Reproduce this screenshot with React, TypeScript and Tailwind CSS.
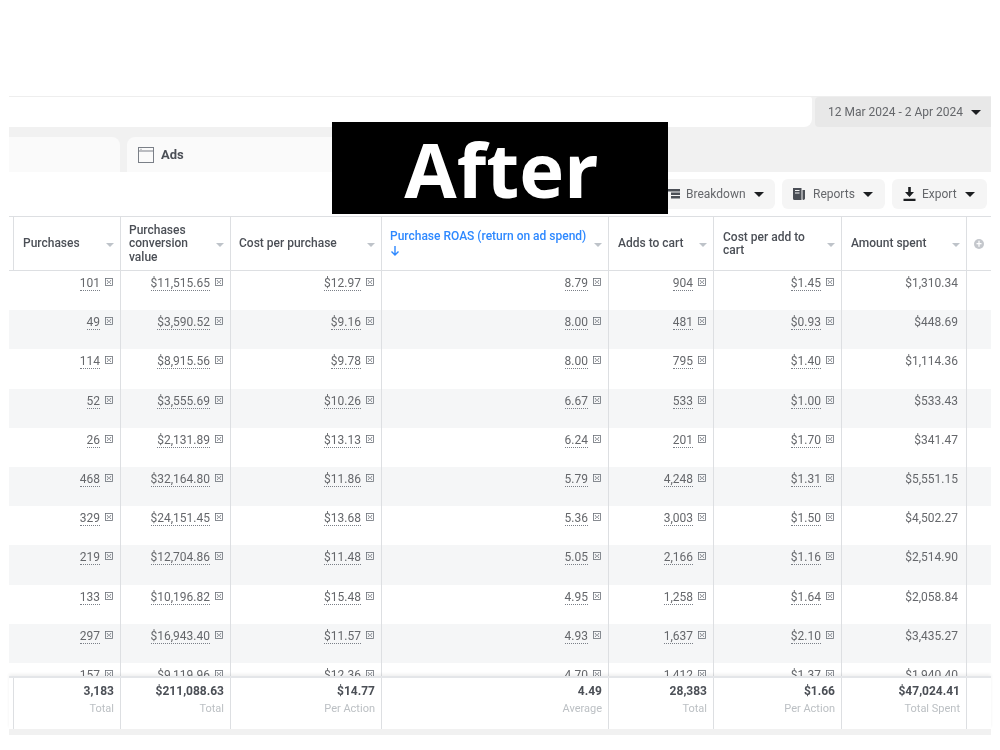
import React from 'react';

const rows = [
  ['101', '$11,515.65', '$12.97', '8.79', '904', '$1.45', '$1,310.34'],
  ['49', '$3,590.52', '$9.16', '8.00', '481', '$0.93', '$448.69'],
  ['114', '$8,915.56', '$9.78', '8.00', '795', '$1.40', '$1,114.36'],
  ['52', '$3,555.69', '$10.26', '6.67', '533', '$1.00', '$533.43'],
  ['26', '$2,131.89', '$13.13', '6.24', '201', '$1.70', '$341.47'],
  ['468', '$32,164.80', '$11.86', '5.79', '4,248', '$1.31', '$5,551.15'],
  ['329', '$24,151.45', '$13.68', '5.36', '3,003', '$1.50', '$4,502.27'],
  ['219', '$12,704.86', '$11.48', '5.05', '2,166', '$1.16', '$2,514.90'],
  ['133', '$10,196.82', '$15.48', '4.95', '1,258', '$1.64', '$2,058.84'],
  ['297', '$16,943.40', '$11.57', '4.93', '1,637', '$2.10', '$3,435.27'],
  ['157', '$9,119.96', '$12.36', '4.70', '1,412', '$1.37', '$1,940.40'],
];

const headers = [
  'Purchases',
  'Purchases conversion value',
  'Cost per purchase',
  'Purchase ROAS (return on ad spend)',
  'Adds to cart',
  'Cost per add to cart',
  'Amount spent',
];

const totals = [
  ['3,183', 'Total'],
  ['$211,088.63', 'Total'],
  ['$14.77', 'Per Action'],
  ['4.49', 'Average'],
  ['28,383', 'Total'],
  ['$1.66', 'Per Action'],
  ['$47,024.41', 'Total Spent'],
];

const gridCols = 'grid grid-cols-[4px_107px_110px_151px_227px_105px_128px_125px_25px]';

function Caret() {
  return <span className="ml-2 inline-block h-0 w-0 border-x-[5px] border-t-[5px] border-x-transparent border-t-[#1c1e21]" />;
}

function SortCaret() {
  return <span className="block h-0 w-0 border-x-[4px] border-t-[4px] border-x-transparent border-t-[#bec3c9]" />;
}

function FlagIcon() {
  return (
    <svg width="8" height="8" viewBox="0 0 8 8" className="ml-[5px] shrink-0" fill="none" stroke="#6b7078" strokeWidth="0.8">
      <rect x="0.5" y="0.5" width="7" height="7" />
      <path d="M2 2l1.6 2.2L2 6M6 2L4.4 4.2 6 6" />
    </svg>
  );
}

function HeaderCell({ label, index }: { label: string; index: number }) {
  const narrow = index === 1 || index === 5;
  const tight = index >= 1 && index <= 3;
  return (
    <div className={`flex h-full items-center justify-between border-l border-[#dddfe2] pr-[6px] ${tight ? 'pl-[8px]' : 'pl-[9px]'}`}>
      {index === 3 ? (
        <div className="text-[#2d88ff]">
          <div>{label}</div>
          <svg width="10" height="12" viewBox="0 0 10 12" fill="none" stroke="#2d88ff" strokeWidth="1.4" className="mt-[1px]">
            <path d="M5 1v9M1.5 6.5L5 10l3.5-3.5" />
          </svg>
        </div>
      ) : (
        <div className={narrow ? 'max-w-[88px] pt-[1px]' : 'pt-[1px]'}>{label}</div>
      )}
      <div className="ml-1 shrink-0 pt-[3px]">
        <SortCaret />
      </div>
    </div>
  );
}

export default function App() {
  return (
    <div className="relative h-[750px] w-[1000px] overflow-hidden bg-white font-['Roboto',sans-serif] text-[12px] text-[#606770]">
      <div className="h-[96px]" />
      <div className="mx-[9px] blur-[0.35px]">
        <div className="flex h-[31px] border-t border-[#eeeeee] bg-[#f1f1f1]">
          <div className="flex-1 rounded-br-[8px] rounded-tr-[2px] bg-white" />
          <div className="ml-[3px] flex w-[176px] items-center rounded-l-[4px] bg-[#e8e8e8] pl-[13px] text-[#65676b]">
            12 Mar 2024 - 2 Apr 2024
            <Caret />
          </div>
        </div>

        <div className="flex h-[45px] items-end gap-[7px] bg-[#f1f1f1]">
          <div className="h-[35px] w-[111px] rounded-tr-[8px] bg-[#fafafa]" />
          <div className="flex h-[35px] w-[240px] items-center rounded-t-[8px] bg-[#fafafa] pl-[11px]">
            <svg width="16" height="16" viewBox="0 0 16 16" fill="none" stroke="#7a7f87" strokeWidth="1">
              <rect x="0.5" y="0.5" width="15" height="15" />
              <path d="M0.5 4h15M2.5 2.3h1" />
            </svg>
            <span className="ml-[7px] text-[13px] font-bold text-[#4b4f56]">Ads</span>
          </div>
        </div>

        <div className="flex h-[44px] items-start justify-end gap-[7px] rounded-tr-[8px] bg-white pr-[4px] pt-[7px]">
          <div className="flex h-[30px] w-[115px] items-center rounded-[6px] bg-[#f5f5f5] pl-[8px] text-[#65676b]">
            <svg width="12" height="12" viewBox="0 0 12 12" fill="#4b4f56" className="mr-[6px]">
              <path d="M0 1h12v2.4H0zM3 4.5h9v2.4H3zM3 8h9v2.4H3z" />
            </svg>
            Breakdown
            <Caret />
          </div>
          <div className="flex h-[30px] w-[103px] items-center rounded-[6px] bg-[#f5f5f5] pl-[10px] text-[#65676b]">
            <svg width="14" height="14" viewBox="0 0 14 14" fill="#4b4f56" className="mr-[7px]">
              <path d="M1 1h8.5v12H2.5A1.5 1.5 0 0 1 1 11.5zM10.5 3H13v8.5a1.5 1.5 0 0 1-2.5 1z" />
              <path d="M3 3.5h4.5M3 6h4.5" stroke="#f5f5f5" strokeWidth="1" />
            </svg>
            Reports
            <Caret />
          </div>
          <div className="flex h-[30px] w-[95px] items-center rounded-[6px] bg-[#f5f5f5] pl-[11px] text-[#65676b]">
            <svg width="13" height="14" viewBox="0 0 13 14" fill="#1c1e21" className="mr-[6px]">
              <path d="M5.2 0h2.6v5H11L6.5 10 2 5h3.2zM0.5 11.7h12V14H0.5z" />
            </svg>
            Export
            <Caret />
          </div>
        </div>

        <div className={`${gridCols} h-[55px] border-y border-[#dddfe2] font-medium leading-[13.5px] text-[#4b4f56]`}>
          <div />
          {headers.map((h, i) => (
            <HeaderCell key={h} label={h} index={i} />
          ))}
          <div className="flex items-center justify-center border-l border-[#dddfe2]">
            <span className="flex h-[10px] w-[10px] items-center justify-center rounded-full bg-[#c4c7cc] text-[10px] leading-none text-white">+</span>
          </div>
        </div>

        <div className="h-[405px] overflow-hidden">
          {rows.map((row, r) => (
            <div key={row[0]} className={`${gridCols} h-[39.2px] ${r % 2 === 1 ? 'bg-[#f5f6f7]' : 'bg-white'}`}>
              <div />
              {row.map((v, i) => (
                <div key={i} className={`flex items-start justify-end pr-[7px] pt-[5px] ${i === 0 ? '' : 'border-l border-[#dddfe2]'}`}>
                  {i === 6 ? (
                    <span className="pr-[1px] leading-[14px] text-[#65676b]">{v}</span>
                  ) : (
                    <>
                      <span className="border-b border-dotted border-[#7a7f87] leading-[14px] text-[#65676b]">{v}</span>
                      <span className="pt-[2px]">
                        <FlagIcon />
                      </span>
                    </>
                  )}
                </div>
              ))}
              <div className="border-l border-[#dddfe2]" />
            </div>
          ))}
        </div>

        <div className={`${gridCols} relative h-[53px] border-t-2 border-[#e4e6e9] bg-white text-right shadow-[0_-2px_3px_rgba(0,0,0,0.06)]`}>
          <div />
          {totals.map(([v, l]) => (
            <div key={v} className="border-l border-[#dddfe2] pr-[6px] pt-[5px]">
              <div className="text-[12px] font-bold leading-[16px] text-[#4b4f56]">{v}</div>
              <div className="mt-[3px] text-[11px] leading-[14px] text-[#bcc0c4]">{l}</div>
            </div>
          ))}
          <div className="border-l border-[#dddfe2]" />
        </div>
        <div className="h-[6px] bg-[#f1f1f1]" />
      </div>

      <div className="absolute left-[332px] top-[122px] flex h-[92px] w-[336px] items-center justify-center bg-black pl-[3px] pt-[2px] font-['Open_Sans',sans-serif] text-[76px] font-bold leading-none text-white">
        After
      </div>
    </div>
  );
}
